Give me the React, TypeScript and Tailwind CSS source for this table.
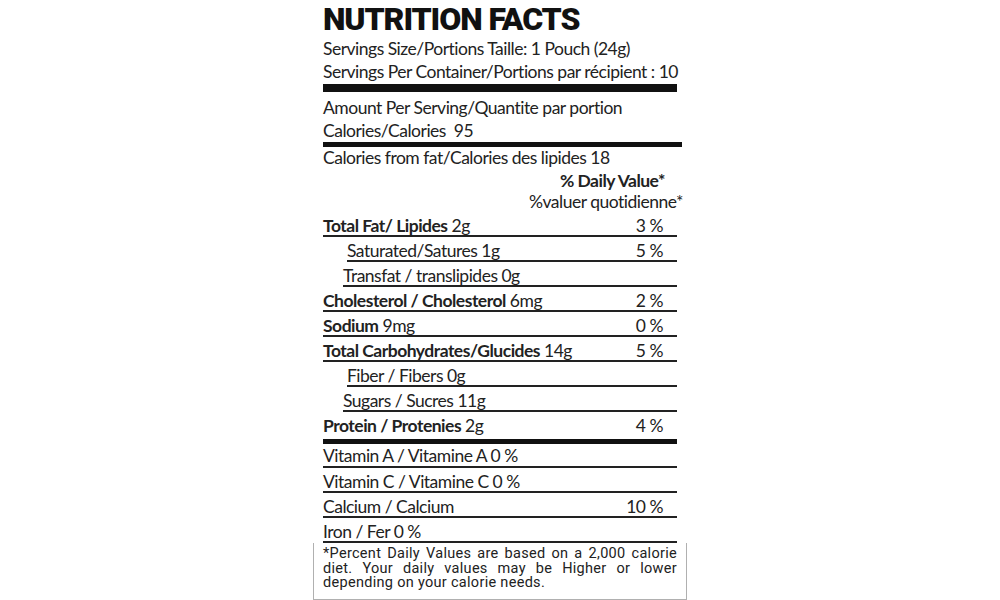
import React from "react";

type Row = { b?: string; r?: string; pct?: string; indent?: string };

const rows: Row[] = [
  { b: "Total Fat/ Lipides", r: " 2g", pct: "3 %" },
  { r: "Saturated/Satures 1g", pct: "5 %", indent: "ml-[24px]" },
  { r: "Transfat / translipides 0g", indent: "ml-[20px]" },
  { b: "Cholesterol / Cholesterol", r: " 6mg", pct: "2 %" },
  { b: "Sodium", r: " 9mg", pct: "0 %" },
  { b: "Total Carbohydrates/Glucides", r: " 14g", pct: "5 %" },
  { r: "Fiber / Fibers 0g", indent: "ml-[24px]" },
  { r: "Sugars / Sucres 11g", indent: "ml-[20px]" },
];

const vit: Row[] = [
  { r: "Vitamin C / Vitamine C 0 %" },
  { r: "Calcium / Calcium", pct: "10 %" },
  { r: "Iron / Fer 0 %" },
];

export default function App() {
  return (
    <div className="w-[1000px] h-[600px] bg-white flex justify-center text-[#222] font-['Lato',sans-serif] text-[17.5px] tracking-[-0.5px] overflow-hidden">
      <div className="w-[374px] flex flex-col">
        <div className="px-[10px] flex flex-col">
          <div className="mt-[3px] h-[32px] leading-[32px] text-[32px] font-black tracking-[-1.1px] font-['Roboto',sans-serif] [font-stretch:88%] text-[#111] whitespace-nowrap">
            NUTRITION FACTS
          </div>
          <div className="mt-[2px] leading-[23px]">Servings Size/Portions Taille: 1 Pouch (24g)</div>
          <div className="leading-[23px] whitespace-nowrap">Servings Per Container/Portions par récipient : 10</div>
          <div className="mt-[1px] h-[8px] bg-[#111]" />
          <div className="mt-[4px] leading-[23px]">Amount Per Serving/Quantite par portion</div>
          <div className="leading-[23px]">Calories/Calories&nbsp; 95</div>
          <div className="h-[5px] bg-[#111] -mr-[5px]" />
          <div className="leading-[21px]">Calories from fat/Calories des lipides 18</div>
          <div className="mt-[2px] leading-[21px] font-bold text-right pr-[12px]">% Daily Value*</div>
          <div className="leading-[21px] text-right -mr-[6px]">%valuer quotidienne*</div>

          {rows.map((row, i) => (
            <div
              key={i}
              className={`h-[25px] border-b-2 border-[#222] flex justify-between pr-[14px] ${row.indent ?? ""}`}
            >
              <div className="pt-[4px] leading-[20px] whitespace-nowrap">
                {row.b && <span className="font-bold">{row.b}</span>}
                {row.r}
              </div>
              {row.pct && <div className="pt-[4px] leading-[20px]">{row.pct}</div>}
            </div>
          ))}
          <div className="h-[24px] flex justify-between pr-[14px]">
            <div className="pt-[4px] leading-[20px] whitespace-nowrap">
              <span className="font-bold">Protein / Protenies</span> 2g
            </div>
            <div className="pt-[4px] leading-[20px]">4 %</div>
          </div>
          <div className="mt-[3px] h-[5px] bg-[#111]" />
          <div className="h-[24px] border-b-2 border-[#222] flex">
            <div className="pt-[2px] leading-[20px] whitespace-nowrap">Vitamin A / Vitamine A 0 %</div>
          </div>
          {vit.map((row, i) => (
            <div key={i} className="h-[25px] border-b-2 border-[#222] flex justify-between pr-[14px]">
              <div className="pt-[4px] leading-[20px] whitespace-nowrap">{row.r}</div>
              {row.pct && <div className="pt-[4px] leading-[20px]">{row.pct}</div>}
            </div>
          ))}
        </div>
        <div className="h-[59px] border-x border-b border-[#b0b0b0] px-[9px] pt-[4px] font-['Roboto',sans-serif] text-[14.5px] leading-[14.5px] tracking-[0.3px] text-justify text-[#222]">
          *Percent Daily Values are based on a 2,000 calorie diet. Your daily values may be Higher or lower depending on your calorie needs.
        </div>
      </div>
    </div>
  );
}
